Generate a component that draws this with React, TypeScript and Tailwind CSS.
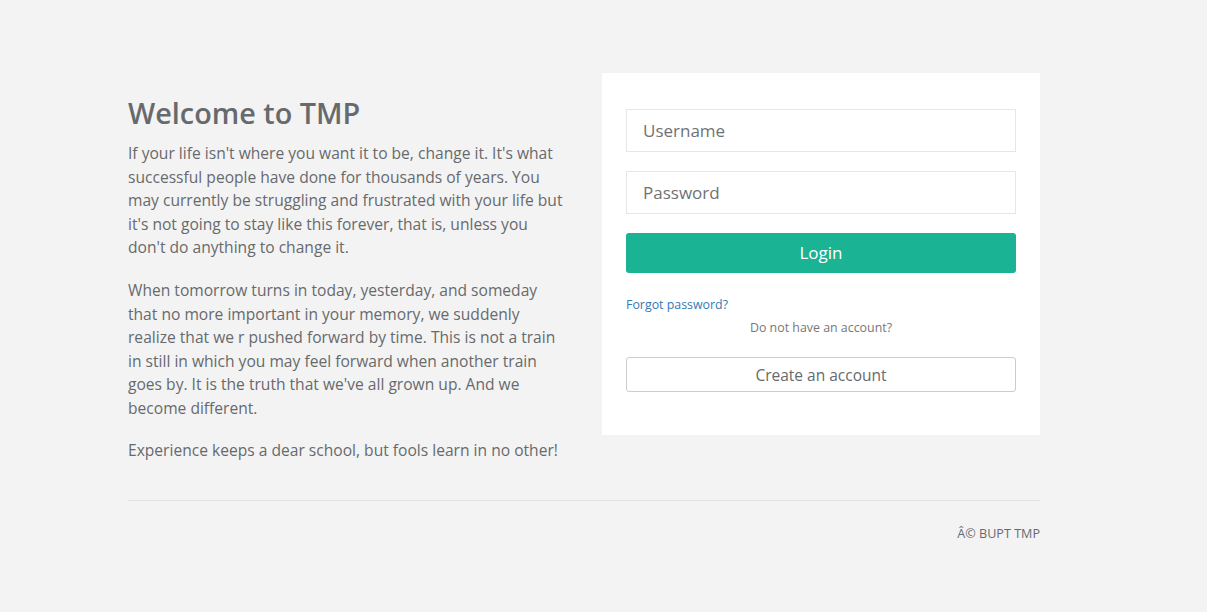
export default function App() {
  return (
    <div className="min-h-[612px] bg-[#f3f3f4] text-[#676a6c] font-['Open_Sans',sans-serif]">
      <div className="ml-[128px] w-[912px] pt-[73px]">
        <div className="flex gap-[33px]">
          <div className="w-[441px] pt-[21px]">
            <h2 className="text-[28.8px] font-semibold leading-[38px]">Welcome to TMP</h2>
            <p className="mt-[10px] text-[15.6px] leading-[23.5px]">
              If your life isn't where you want it to be, change it. It's what successful people have done for
              thousands of years. You may currently be struggling and frustrated with your life but it's not going to
              stay like this forever, that is, unless you don't do anything to change it.
            </p>
            <p className="mt-[19.5px] text-[15.6px] leading-[23.5px]">
              When tomorrow turns in today, yesterday, and someday that no more important in your memory, we suddenly
              realize that we r pushed forward by time. This is not a train in still in which you may feel forward
              when another train goes by. It is the truth that we've all grown up. And we become different.
            </p>
            <p className="mt-[19px] text-[15.6px] leading-[23.5px]">
              Experience keeps a dear school, but fools learn in no other!
            </p>
          </div>
          <div className="w-[438px] self-start bg-white px-[24px] pt-[36px] pb-[43px]">
            <input
              type="text"
              placeholder="Username"
              className="block h-[43px] w-full border border-[#e5e6e7] px-[16px] text-[17px] text-[#676a6c] placeholder:text-[#6f7275] outline-none"
            />
            <input
              type="password"
              placeholder="Password"
              className="mt-[19px] block h-[43px] w-full border border-[#e5e6e7] px-[16px] text-[17px] text-[#676a6c] placeholder:text-[#6f7275] outline-none"
            />
            <button
              type="button"
              className="mt-[19px] block h-[40px] w-full rounded-[3px] bg-[#1ab394] text-[17px] text-white"
            >
              Login
            </button>
            <a href="#" className="mt-[23px] block w-fit text-[12.4px] leading-[18px] text-[#337ab7]">
              Forgot password?
            </a>
            <p className="mt-[5px] text-center text-[12.4px] leading-[18px] text-[#777]">Do not have an account?</p>
            <button
              type="button"
              className="mt-[20px] block h-[35px] w-full rounded-[3px] border border-[#ccc] bg-white pt-[2px] text-[15.5px] text-[#676a6c]"
            >
              Create an account
            </button>
          </div>
        </div>
        <hr className="mt-[37px] border-t border-[#e0e0e0]" />
        <div className="mt-[25px] text-right text-[12.6px] leading-[16px]">Â© BUPT TMP</div>
      </div>
    </div>
  );
}
